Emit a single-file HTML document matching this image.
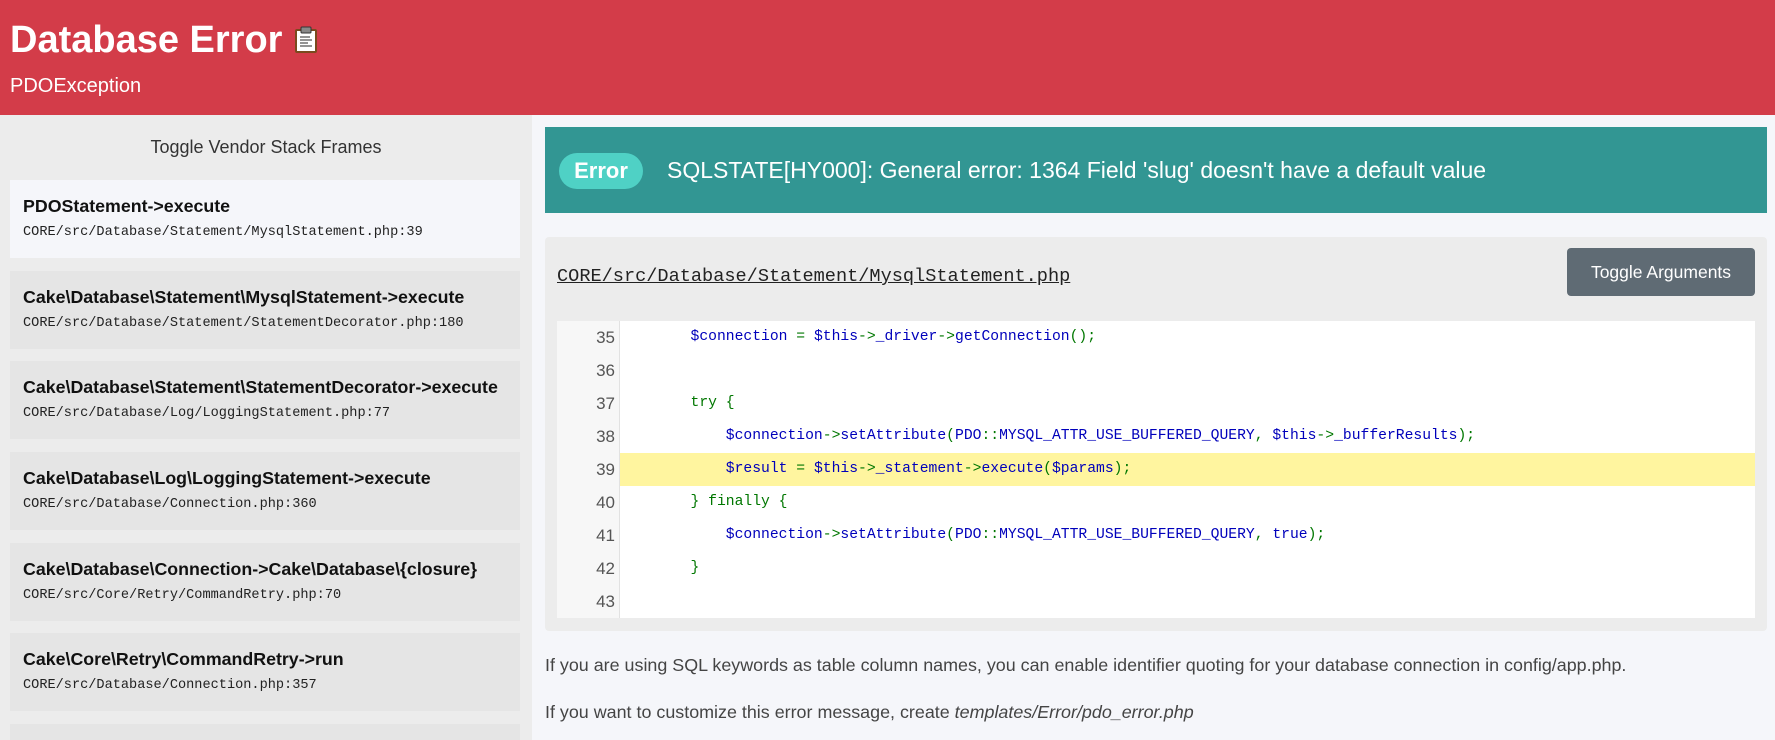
<!DOCTYPE html>
<html><head><meta charset="utf-8"><style>
*{margin:0;padding:0;box-sizing:border-box}
html,body{width:1775px;height:740px;overflow:hidden}
body{background:#f5f6fa;font-family:"Liberation Sans",Arial,sans-serif;color:#333;position:relative}
.hdr{position:absolute;left:0;top:0;width:1775px;height:115px;background:#d33c49;color:#fff}
.hdr h1{position:absolute;left:10px;top:17px;font-size:38px;font-weight:bold;line-height:46px;white-space:nowrap}
.hdr .sub{position:absolute;left:10px;top:74px;font-size:20px;line-height:24px}
.side{position:absolute;left:0;top:115px;width:532px;height:625px;background:#ececec;overflow:hidden}
.tog{position:absolute;left:0;width:532px;top:21px;text-align:center;font-size:18px;color:#333;line-height:22px}
.it{position:absolute;left:10px;width:510px;height:78px;background:#e5e5e5}
.it b{position:absolute;left:13px;top:16px;font-size:17.8px;color:#111;white-space:nowrap}
.it code{position:absolute;left:13px;top:45px;font-family:"Liberation Mono",monospace;font-size:13.6px;color:#222;white-space:nowrap}
.it.a{background:#f5f6fa}
.err{position:absolute;left:545px;top:127px;width:1222px;height:86px;background:#329693;color:#fff}
.badge{position:absolute;left:14px;top:26px;width:84px;height:36px;border-radius:18px;background:#4fd1c5;font-weight:bold;font-size:22px;line-height:36px;text-align:center}
.msg{position:absolute;left:122px;top:29px;font-size:23px;line-height:28px;white-space:nowrap}
.pan{position:absolute;left:545px;top:237px;width:1222px;height:394px;background:#ececec;border-radius:4px}
.fn{position:absolute;left:12px;top:29px;font-family:"Liberation Mono",monospace;font-size:18.6px;text-decoration:underline;color:#222;white-space:nowrap}
.btn{position:absolute;left:1022px;top:11px;width:188px;height:48px;background:#5f6b74;border-radius:4px;color:#fff;font-size:17.5px;line-height:48px;text-align:center}
.code{position:absolute;left:12px;top:84px;width:1198px;height:297px;background:#fff;font-family:"Liberation Mono",monospace;font-size:14.7px}
.gut{position:absolute;left:0;top:0;width:63px;height:297px;background:#f7f7f7;border-right:1px solid #e2e2e2}
.ln{position:absolute;left:0;height:33px;line-height:33px;width:1198px;white-space:pre}
.ln .n{display:inline-block;width:58px;text-align:right;color:#555;font-family:"Liberation Sans",sans-serif;font-size:17px}
.ln .c{position:absolute;left:63px;top:0}
.hl{background:#fff59f}
.b{color:#0000bb}.g{color:#007700}
.p{position:absolute;left:545px;font-size:17.9px;line-height:21px;color:#444;white-space:nowrap}
</style></head><body>
<div class="hdr"><h1>Database Error <svg width="26" height="28" viewBox="0 0 26 28" style="vertical-align:-2px"><rect x="2" y="3" width="22" height="24" rx="2" fill="#7a4a1e"/><rect x="4" y="5" width="18" height="20" fill="#fff"/><rect x="8" y="1" width="10" height="6" rx="1" fill="#888" stroke="#333"/><path d="M7 11h10M7 14h12M7 17h8M7 20h12" stroke="#555" stroke-width="1.3"/></svg></h1><div class="sub">PDOException</div></div>
<div class="side">
<div class="tog">Toggle Vendor Stack Frames</div>
<div class="it a" style="top:65px"><b>PDOStatement-&gt;execute</b><code>CORE/src/Database/Statement/MysqlStatement.php:39</code></div>
<div class="it" style="top:156px"><b>Cake\Database\Statement\MysqlStatement-&gt;execute</b><code>CORE/src/Database/Statement/StatementDecorator.php:180</code></div>
<div class="it" style="top:246px"><b>Cake\Database\Statement\StatementDecorator-&gt;execute</b><code>CORE/src/Database/Log/LoggingStatement.php:77</code></div>
<div class="it" style="top:337px"><b>Cake\Database\Log\LoggingStatement-&gt;execute</b><code>CORE/src/Database/Connection.php:360</code></div>
<div class="it" style="top:428px"><b>Cake\Database\Connection-&gt;Cake\Database\{closure}</b><code>CORE/src/Core/Retry/CommandRetry.php:70</code></div>
<div class="it" style="top:518px"><b>Cake\Core\Retry\CommandRetry-&gt;run</b><code>CORE/src/Database/Connection.php:357</code></div>
<div class="it" style="top:609px;height:16px"></div>
</div>
<div class="err"><div class="badge">Error</div><div class="msg">SQLSTATE[HY000]: General error: 1364 Field 'slug' doesn't have a default value</div></div>
<div class="pan"><div class="fn">CORE/src/Database/Statement/MysqlStatement.php</div><div class="btn">Toggle Arguments</div>
<div class="code"><div class="gut"></div>
<div class="ln" style="top:0"><span class="n">35</span><span class="c">        <span class="b">$connection </span><span class="g">= </span><span class="b">$this</span><span class="g">-&gt;</span><span class="b">_driver</span><span class="g">-&gt;</span><span class="b">getConnection</span><span class="g">();</span></span></div>
<div class="ln" style="top:33px"><span class="n">36</span></div>
<div class="ln" style="top:66px"><span class="n">37</span><span class="c">        <span class="g">try {</span></span></div>
<div class="ln" style="top:99px"><span class="n">38</span><span class="c">            <span class="b">$connection</span><span class="g">-&gt;</span><span class="b">setAttribute</span><span class="g">(</span><span class="b">PDO</span><span class="g">::</span><span class="b">MYSQL_ATTR_USE_BUFFERED_QUERY</span><span class="g">, </span><span class="b">$this</span><span class="g">-&gt;</span><span class="b">_bufferResults</span><span class="g">);</span></span></div>
<div class="ln" style="top:132px"><span class="n">39</span><span class="c hl" style="width:1135px">            <span class="b">$result </span><span class="g">= </span><span class="b">$this</span><span class="g">-&gt;</span><span class="b">_statement</span><span class="g">-&gt;</span><span class="b">execute</span><span class="g">(</span><span class="b">$params</span><span class="g">);</span></span></div>
<div class="ln" style="top:165px"><span class="n">40</span><span class="c">        <span class="g">} finally {</span></span></div>
<div class="ln" style="top:198px"><span class="n">41</span><span class="c">            <span class="b">$connection</span><span class="g">-&gt;</span><span class="b">setAttribute</span><span class="g">(</span><span class="b">PDO</span><span class="g">::</span><span class="b">MYSQL_ATTR_USE_BUFFERED_QUERY</span><span class="g">, </span><span class="b">true</span><span class="g">);</span></span></div>
<div class="ln" style="top:231px"><span class="n">42</span><span class="c">        <span class="g">}</span></span></div>
<div class="ln" style="top:264px"><span class="n">43</span></div>
</div></div>
<div class="p" style="top:655px">If you are using SQL keywords as table column names, you can enable identifier quoting for your database connection in config/app.php.</div>
<div class="p" style="top:702px">If you want to customize this error message, create <i>templates/Error/pdo_error.php</i></div>
</body></html>
